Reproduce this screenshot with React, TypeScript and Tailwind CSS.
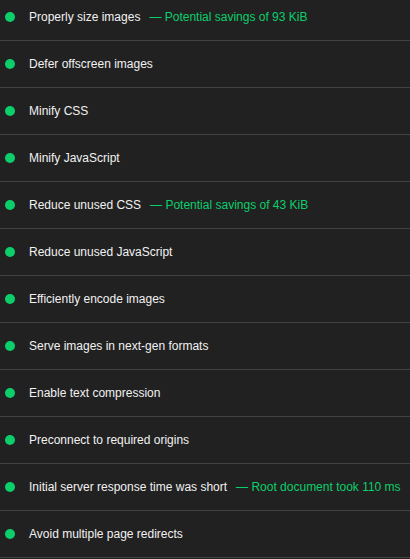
const audits: { title: string; value?: string }[] = [
  { title: 'Properly size images', value: 'Potential savings of 93 KiB' },
  { title: 'Defer offscreen images' },
  { title: 'Minify CSS' },
  { title: 'Minify JavaScript' },
  { title: 'Reduce unused CSS', value: 'Potential savings of 43 KiB' },
  { title: 'Reduce unused JavaScript' },
  { title: 'Efficiently encode images' },
  { title: 'Serve images in next-gen formats' },
  { title: 'Enable text compression' },
  { title: 'Preconnect to required origins' },
  { title: 'Initial server response time was short', value: 'Root document took 110 ms' },
  { title: 'Avoid multiple page redirects' },
];

export default function App() {
  return (
    <div className="w-[410px] h-[559px] overflow-hidden bg-[#212121] font-['Liberation_Sans',Arial,sans-serif]">
      <div className="-mt-[6px]">
        {audits.map((a) => (
          <div key={a.title} className="h-[47px] flex items-center border-b border-[#434343]">
            <span className="ml-[5px] w-[10px] h-[10px] rounded-full bg-[#0cce6b] shrink-0" />
            <span className="ml-[14px] text-[12px] text-[#f1f1f1] whitespace-nowrap">{a.title}</span>
            {a.value && (
              <span className="ml-[9px] text-[12px] text-[#0cce6b] whitespace-nowrap">
                — {a.value}
              </span>
            )}
          </div>
        ))}
      </div>
    </div>
  );
}
